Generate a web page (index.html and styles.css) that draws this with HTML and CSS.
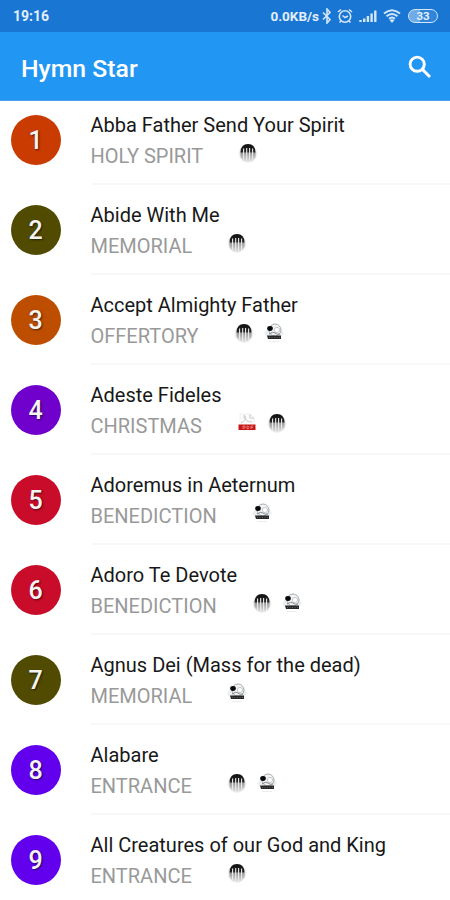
FILE: index.html
```
<!DOCTYPE html>
<html lang="en">
<head>
<meta charset="utf-8">
<title>Hymn Star</title>
<link rel="stylesheet" href="styles.css">
</head>
<body>
<svg class="defs" aria-hidden="true">
  <defs>
    <linearGradient id="fade" x1="0" y1="0" x2="0" y2="1"><stop offset="0" stop-color="#111"/><stop offset=".42" stop-color="#222"/><stop offset=".52" stop-color="#999"/><stop offset="1" stop-color="#e4e4e4"/></linearGradient>
    <radialGradient id="halo"><stop offset=".6" stop-color="#d2d2d2"/><stop offset="1" stop-color="#fff"/></radialGradient>
    <symbol id="keys" viewBox="0 0 20 20">
      <circle cx="10" cy="10.500" r="10" fill="url(#halo)"/>
      <path d="M2.500 9Q3 1 10 1t7.500 8v5Q15 18.500 10 19 5 18.500 2.500 14z" fill="url(#fade)"/>
      <path d="M5.600 5.500v12M8.700 5v14M11.600 5v14M14.600 5.500v12" stroke="#ececec" stroke-width="1.100"/>
    </symbol>
    <symbol id="score" viewBox="0 0 20 20">
      <path d="M0 10.500L4 5h12l4 5-4 5.500H4z" fill="#eceff1"/>
      <circle cx="11" cy="7" r="6" fill="#f1f3f4" stroke="#a5abb0"/>
      <ellipse cx="6" cy="5.500" rx="2.800" ry="2.400" fill="#080808"/>
      <circle cx="13" cy="7" r="2.600" fill="#fff" stroke="#bbb" stroke-width=".8"/>
      <path d="M5 11q4-3 6-1t5 1" fill="none" stroke="#888"/>
      <path d="M3 12.500h14v3.500H4z" fill="#282828"/>
      <path d="M5 14.500h11" stroke="#777" stroke-width=".7" stroke-dasharray="1 1.500"/>
      <path d="M5 18.500h10" stroke="#eee"/>
    </symbol>
    <symbol id="pdf" viewBox="0 0 20 20">
      <path d="M3 1h10l4 4v12H3z" fill="#fafafa" stroke="#f0f0f0"/>
      <path d="M4 10Q10 7 8 3q-1-2-1 1 2 5 8 5M13 1v4h4" fill="none" stroke="#ccc"/>
      <path d="M1.500 11.500h17v5.500h-17z" fill="#c91616"/>
      <path d="M6 16v-3h2v2H6M10 13v3q2 0 2-1.500T10 13M14 16v-3h2.300M14 14.500h2" fill="none" stroke="#ed9a9a" stroke-width=".7"/>
    </symbol>
  </defs>
</svg>
<div class="screen">
  <div class="status">
    <span class="clock">19:16</span>
    <span class="speed">0.0KB/s</span>
    <svg class="bt" viewBox="0 0 10 16"><path d="M1 4.500l7 7L5 15V1l3 3.500-7 7"/></svg>
    <svg class="alarm" viewBox="0 0 16 16"><circle cx="8" cy="8.500" r="5.700"/><path d="M5.500 7.500L8 9.500l3-1.500M1 4l3-2.500M15 4l-3-2.500M4 13l-1.500 1.500M12 13l1.500 1.500"/></svg>
    <svg class="signal" viewBox="0 0 18 14"><path d="M1.500 13v-2M5.200 13V9.500M8.900 13V7M12.600 13V4.500M16.300 13V1.500"/></svg>
    <svg class="wifi" viewBox="0 0 18 14"><path d="M1 4.500Q9-2 17 4.500M3.500 7.200q5.500-4.500 11 0M6 9.800q3-2.500 6 0"/><path class="dot" d="M6.500 11q2.500-1.500 5 0L9 14z"/></svg>
    <span class="battery">33</span>
  </div>
  <header class="appbar">
    <h1>Hymn Star</h1>
    <svg class="search" viewBox="0 0 24 24"><circle cx="9.200" cy="9.200" r="7.100"/><path d="M14.400 14.400L22 22"/></svg>
  </header>
  <main class="list">
    <article class="row"><div class="num c-orange">1</div><div class="body"><h2>Abba Father Send Your Spirit</h2><div class="meta"><span>HOLY SPIRIT</span><svg><use href="#keys"/></svg></div></div></article>
    <article class="row"><div class="num c-olive">2</div><div class="body"><h2>Abide With Me</h2><div class="meta"><span>MEMORIAL</span><svg><use href="#keys"/></svg></div></div></article>
    <article class="row"><div class="num c-amber">3</div><div class="body"><h2>Accept Almighty Father</h2><div class="meta"><span>OFFERTORY</span><svg><use href="#keys"/></svg><svg><use href="#score"/></svg></div></div></article>
    <article class="row"><div class="num c-purple">4</div><div class="body"><h2>Adeste Fideles</h2><div class="meta"><span>CHRISTMAS</span><svg><use href="#pdf"/></svg><svg><use href="#keys"/></svg></div></div></article>
    <article class="row"><div class="num c-red">5</div><div class="body"><h2>Adoremus in Aeternum</h2><div class="meta"><span>BENEDICTION</span><svg><use href="#score"/></svg></div></div></article>
    <article class="row"><div class="num c-red">6</div><div class="body"><h2>Adoro Te Devote</h2><div class="meta"><span>BENEDICTION</span><svg><use href="#keys"/></svg><svg><use href="#score"/></svg></div></div></article>
    <article class="row"><div class="num c-olive">7</div><div class="body"><h2>Agnus Dei (Mass for the dead)</h2><div class="meta"><span>MEMORIAL</span><svg><use href="#score"/></svg></div></div></article>
    <article class="row"><div class="num c-violet">8</div><div class="body"><h2>Alabare</h2><div class="meta"><span>ENTRANCE</span><svg><use href="#keys"/></svg><svg><use href="#score"/></svg></div></div></article>
    <article class="row"><div class="num c-violet">9</div><div class="body"><h2>All Creatures of our God and King</h2><div class="meta"><span>ENTRANCE</span><svg><use href="#keys"/></svg></div></div></article>
  </main>
</div>
</body>
</html>
```
FILE: styles.css
```
* { box-sizing: border-box; }
body { margin: 0; background: #fff; font-family: Roboto, sans-serif; }
.defs { display: block; width: 0; height: 0; }
.screen { width: 450px; height: 900px; overflow: hidden; }
.status { height: 32px; padding: 0 12px 0 13px; display: flex; align-items: center; background: #1976d2; color: #e3effb; font-size: 14px; font-weight: 700; }
.status svg { flex: none; fill: none; stroke: #d3e6f8; stroke-width: 1.6; }
.clock { flex: 1; }
.speed { font-size: 13.5px; }
.bt { width: 10px; height: 16px; margin-left: 3px; }
.alarm { width: 16px; height: 16px; margin-left: 5px; }
.signal { width: 18px; height: 14px; margin-left: 6px; }
.status .signal { stroke-width: 2.4; }
.wifi { width: 18px; height: 14px; margin-left: 6px; }
.status .wifi { stroke-width: 2; }
.wifi .dot { fill: #d3e6f8; stroke: none; }
.battery { width: 30px; height: 14px; margin-left: 7px; border: 1.5px solid #d3e6f8; border-radius: 7px; background: linear-gradient(90deg, #6fabe6 40%, #2f85d9 40%); font-size: 11.5px; line-height: 12px; text-align: center; }
.appbar { height: 69px; padding: 5px 18px 0 21px; display: flex; align-items: center; justify-content: space-between; background: #2196f3; border-bottom: 1px solid #4a9fe6; color: #fff; }
h1 { margin: 0; font-size: 24.8px; font-weight: 500; line-height: 30px; }
.search { width: 24px; height: 24px; margin-bottom: 4px; fill: none; stroke: #fff; stroke-width: 2.9; }
.list { margin-top: -6px; padding-left: 10.5px; }
.row { height: 90px; display: flex; align-items: center; }
.num { flex: none; width: 50px; height: 50px; margin-top: -1px; border-radius: 50%; color: #f4f4f4; font-size: 25px; font-weight: 500; line-height: 52px; text-align: center; text-shadow: 1px 1px 2px rgba(0, 0, 0, .6); }
.body { flex: 1; height: 90px; margin-left: 30px; padding-top: 18px; border-bottom: 2px solid #f8f8f8; }
.row:last-child .body { border-bottom: 0; }
h2 { margin: 0; color: #181818; font-size: 20px; font-weight: 400; line-height: 24px; white-space: nowrap; }
.meta { display: flex; align-items: center; height: 24px; margin-top: 7px; color: #999; font-size: 20px; line-height: 24px; }
.meta svg { width: 20px; height: 20px; margin: -6px 10px 0 0; }
.meta span { margin-right: 35px; }
.c-orange { background: #c93b00; }
.c-olive { background: #504b00; }
.c-amber { background: #bd4e00; }
.c-purple { background: #7000cb; }
.c-red { background: #c90c2a; }
.c-violet { background: #6200ed; }
```
